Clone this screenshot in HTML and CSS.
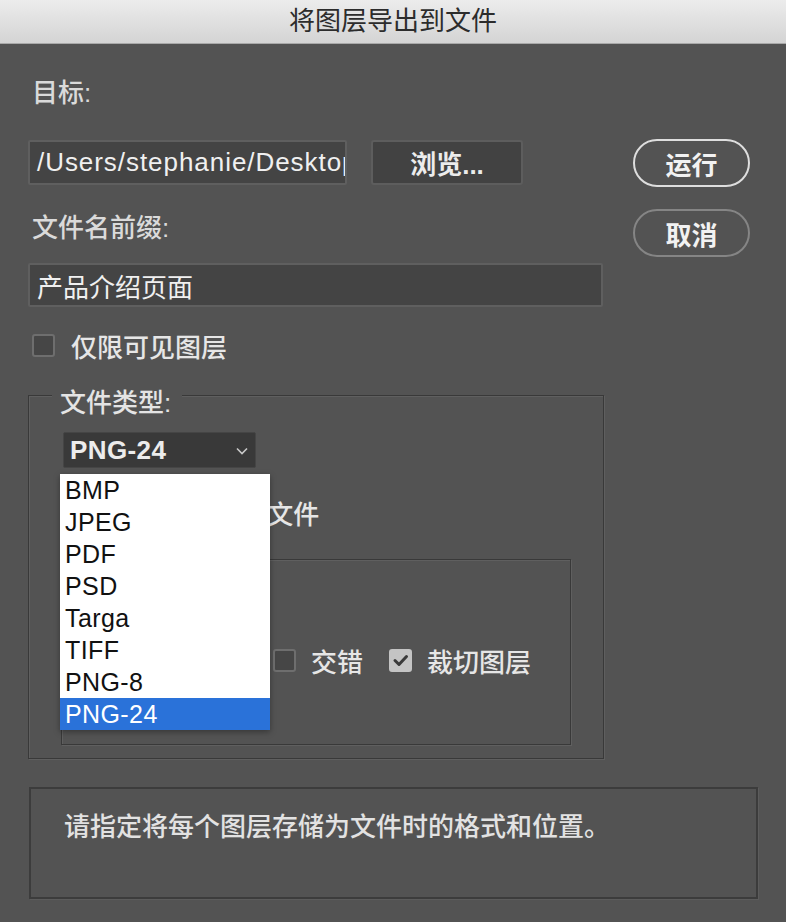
FILE: index.html
```html
<!DOCTYPE html>
<html lang="zh-CN">
<head>
<meta charset="utf-8">
<title>将图层导出到文件</title>
<link rel="stylesheet" href="styles.css">
</head>
<body>
<div class="window">
  <div class="titlebar">将图层导出到文件</div>
  <div class="main">
    <div class="left">
      <div class="label label-target">目标:</div>
      <div class="path-row">
        <div class="field field-path"><span class="field-text">/Users/stephanie/Desktop</span></div>
        <div class="btn-browse">浏览...</div>
      </div>
      <div class="label label-prefix">文件名前缀:</div>
      <div class="field field-prefix"><span class="field-text">产品介绍页面</span></div>
      <label class="check-row check-visible">
        <span class="box"></span>
        <span class="check-label">仅限可见图层</span>
      </label>

      <div class="group">
        <div class="group-title">文件类型:</div>
        <div class="select-wrap">
          <div class="select">
            <span class="select-value">PNG-24</span>
            <svg class="chevron" width="12" height="8" viewBox="0 0 12 8"><polyline points="1,1.5 6,6.5 11,1.5" fill="none" stroke="#c8c8c8" stroke-width="1.6"/></svg>
          </div>
          <ul class="menu">
            <li>BMP</li>
            <li>JPEG</li>
            <li>PDF</li>
            <li>PSD</li>
            <li>Targa</li>
            <li>TIFF</li>
            <li>PNG-8</li>
            <li class="selected">PNG-24</li>
          </ul>
        </div>
        <label class="check-row check-icc">
          <span class="box"></span>
          <span class="check-label">包含 ICC 配置文件</span>
        </label>
        <div class="inner-group">
          <div class="options-row">
            <label class="check-row">
              <span class="box"></span>
              <span class="check-label">交错</span>
            </label>
            <label class="check-row">
              <span class="box box-checked"><svg width="23" height="23" viewBox="0 0 23 23"><polyline points="6,11.5 10,15.5 17.5,7.5" fill="none" stroke="#3a3a3a" stroke-width="3" stroke-linecap="round" stroke-linejoin="round"/></svg></span>
              <span class="check-label">裁切图层</span>
            </label>
          </div>
        </div>
      </div>
    </div>
    <div class="right">
      <div class="pill pill-run">运行</div>
      <div class="pill pill-cancel">取消</div>
    </div>
  </div>
  <div class="desc">请指定将每个图层存储为文件时的格式和位置。</div>
</div>
</body>
</html>
```
FILE: styles.css
```css
* { box-sizing: border-box; }
html, body {
  margin: 0;
  padding: 0;
  background: #535353;
}
body {
  width: 786px;
  height: 922px;
  overflow: hidden;
  font-family: "Liberation Sans", "Noto Sans CJK SC", sans-serif;
  color: #e4e4e4;
}
.window {
  width: 786px;
  height: 922px;
  background: #535353;
}
.titlebar {
  height: 44px;
  background: linear-gradient(#ececec, #d4d4d4);
  border-bottom: 1px solid #a9a9a9;
  text-align: center;
  font-size: 26px;
  line-height: 43px;
  color: #2c2c2c;
}
.main {
  display: flex;
  padding-left: 28px;
}
.left {
  width: 576px;
}
.right {
  margin-left: 29px;
  padding-top: 95px;
  display: flex;
  flex-direction: column;
  gap: 22px;
}
.label {
  font-size: 26px;
  line-height: 30px;
  font-weight: 500;
  color: #dadada;
  padding-left: 4px;
}
.label-target { margin-top: 34px; }
.label-prefix { margin-top: 28px; }
.path-row {
  display: flex;
  gap: 24px;
  margin-top: 32px;
}
.field {
  height: 45px;
  background: #444444;
  border: 2px solid #5f5f5f;
  border-radius: 2px;
  overflow: hidden;
  white-space: nowrap;
  display: flex;
  align-items: center;
  padding-left: 7px;
}
.field-text {
  font-size: 26px;
  letter-spacing: 0.95px;
  color: #f0f0f0;
}
.field-path { width: 319px; }
.field-prefix {
  width: 575px;
  height: 44px;
  margin-top: 20px;
}
.field-prefix .field-text { letter-spacing: 0; }
.btn-browse {
  width: 152px;
  height: 45px;
  background: #424242;
  border: 2px solid #5d5d5d;
  border-radius: 3px;
  display: flex;
  align-items: center;
  justify-content: center;
  font-size: 26px;
  font-weight: 700;
  color: #ececec;
}
.check-row {
  display: flex;
  align-items: center;
  gap: 15px;
  height: 30px;
  font-size: 26px;
  font-weight: 500;
  color: #e6e6e6;
}
.check-visible {
  margin-top: 23px;
  padding-left: 4px;
  gap: 16px;
}
.box {
  width: 23px;
  height: 23px;
  flex: none;
  background: #464646;
  border: 2px solid #6e6e6e;
  border-radius: 3px;
}
.box-checked {
  background: #c4c4c4;
  border-color: #c4c4c4;
  position: relative;
}
.box-checked svg {
  position: absolute;
  left: -2px;
  top: -2px;
}
.group {
  margin-top: 35px;
  width: 576px;
  height: 364px;
  border: 1px solid #393939;
  box-shadow: inset 1px 1px 0 #5f5f5f, 1px 1px 0 #5f5f5f;
}
.group-title {
  display: inline-block;
  margin-top: -8px;
  margin-left: 23px;
  padding: 0 11px 0 8px;
  background: #535353;
  font-size: 26px;
  line-height: 30px;
  font-weight: 500;
  color: #e4e4e4;
  vertical-align: top;
}
.select-wrap {
  position: relative;
  margin-top: 14px;
  margin-left: 34px;
  width: 193px;
}
.select {
  height: 36px;
  background: #393939;
  border: 1px solid #454545;
  border-radius: 2px;
  display: flex;
  align-items: center;
  justify-content: space-between;
  padding: 0 7px 0 6px;
}
.select-value {
  font-size: 26px;
  font-weight: 700;
  color: #ececec;
  letter-spacing: 0.4px;
}
.chevron { margin-top: 2px; }
.menu {
  position: absolute;
  z-index: 5;
  left: -3px;
  top: 42px;
  width: 210px;
  margin: 0;
  padding: 0;
  list-style: none;
  background: #ffffff;
  box-shadow: 0 2px 6px rgba(0, 0, 0, 0.35);
}
.menu li {
  height: 32px;
  line-height: 32px;
  padding-left: 5px;
  font-size: 25px;
  letter-spacing: 0.4px;
  color: #111111;
}
.menu li.selected {
  background: #2a72d9;
  color: #ffffff;
}
.check-icc {
  margin-top: 29px;
  margin-left: 37px;
}
.inner-group {
  margin-top: 32px;
  margin-left: 32px;
  width: 510px;
  height: 186px;
  border: 1px solid #393939;
  box-shadow: inset 1px 1px 0 #5f5f5f, 1px 1px 0 #5f5f5f;
  padding-top: 85px;
}
.options-row {
  display: flex;
  gap: 26px;
  padding-left: 211px;
}
.pill {
  width: 117px;
  height: 48px;
  border-radius: 24px;
  display: flex;
  align-items: center;
  justify-content: center;
  font-size: 26px;
  font-weight: 700;
  color: #f2f2f2;
}
.pill-run { border: 2px solid #dedede; }
.pill-cancel { border: 2px solid #858585; }
.desc {
  margin-top: 28px;
  margin-left: 29px;
  width: 729px;
  height: 112px;
  border: 2px solid #3c3c3c;
  box-shadow: 1px 1px 0 #5c5c5c;
  padding: 23px 0 0 33px;
  font-size: 26px;
  line-height: 30px;
  font-weight: 500;
  color: #e2e2e2;
}
```
